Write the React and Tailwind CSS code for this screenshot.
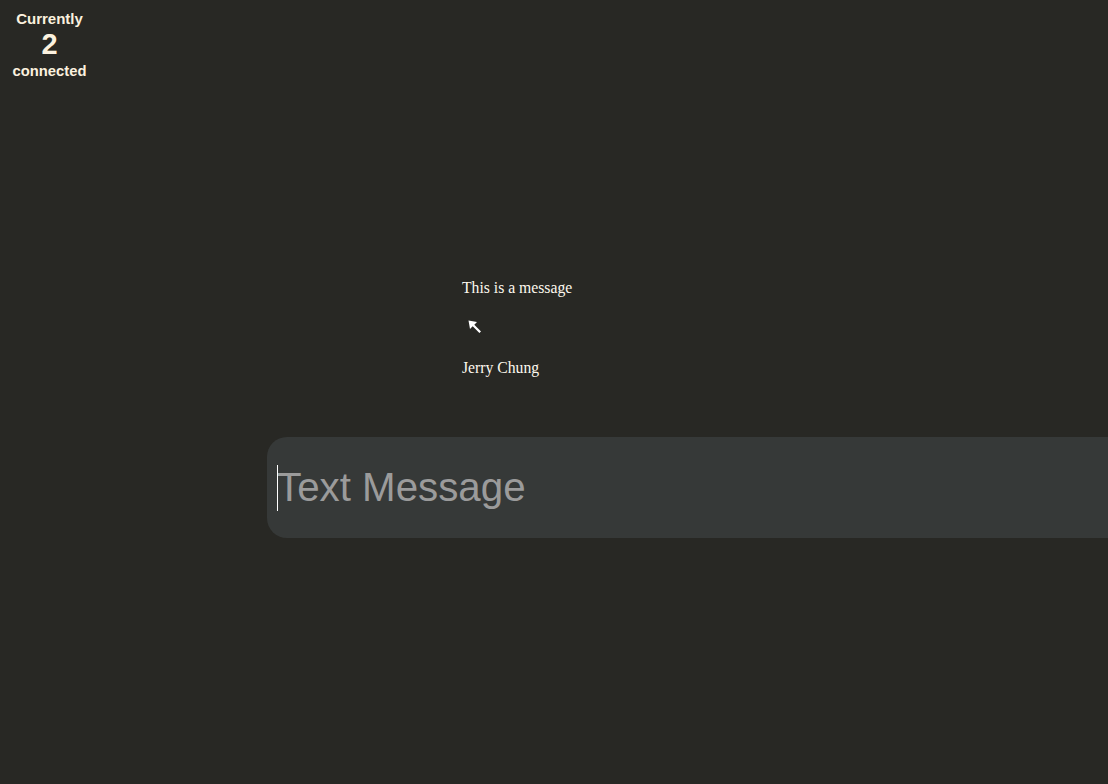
import React from "react"

function PointerIcon() {
  return (
    <svg width="14" height="14" viewBox="0 0 14 14" className="block">
      <path d="M0.5 0.5 L9 2 L6.3 4.7 L13 11.4 L11.4 13 L4.7 6.3 L2 9 Z" fill="#ffffff" />
    </svg>
  )
}

export default function App() {
  return (
    <div className="min-h-screen w-full overflow-hidden bg-[#282824] font-['Liberation_Sans',Arial,sans-serif]">
      {/* connection counter */}
      <div className="w-[99px] pt-[10px] text-center font-bold text-[#fbf1df]">
        <div className="text-[15px] leading-[17px]">Currently</div>
        <div className="text-[29px] leading-[34px]">2</div>
        <div className="pt-px text-[14.8px] leading-[19px]">connected</div>
      </div>

      {/* messages */}
      <div className="pl-[462px] pt-[198px] font-['Liberation_Serif','Times_New_Roman',serif] text-[15.7px] leading-[18px] text-[#fdf8ee]">
        <div>This is a message</div>
        <div className="pt-[23px] pl-[6px]">
          <PointerIcon />
        </div>
        <div className="pt-[25px]">Jerry Chung</div>
      </div>

      {/* input */}
      <div className="pl-[267px] pt-[60px]">
        <div className="relative w-[900px]">
          <input
            type="text"
            placeholder="Text Message"
            className="h-[101px] w-full rounded-[20px] bg-[#363938] pl-[10px] text-[40.3px] text-[#9b9b9b] outline-none placeholder:text-[#9b9b9b]"
          />
          <span className="pointer-events-none absolute left-[10px] top-[28px] h-[46px] w-px bg-white" />
        </div>
      </div>
    </div>
  )
}
